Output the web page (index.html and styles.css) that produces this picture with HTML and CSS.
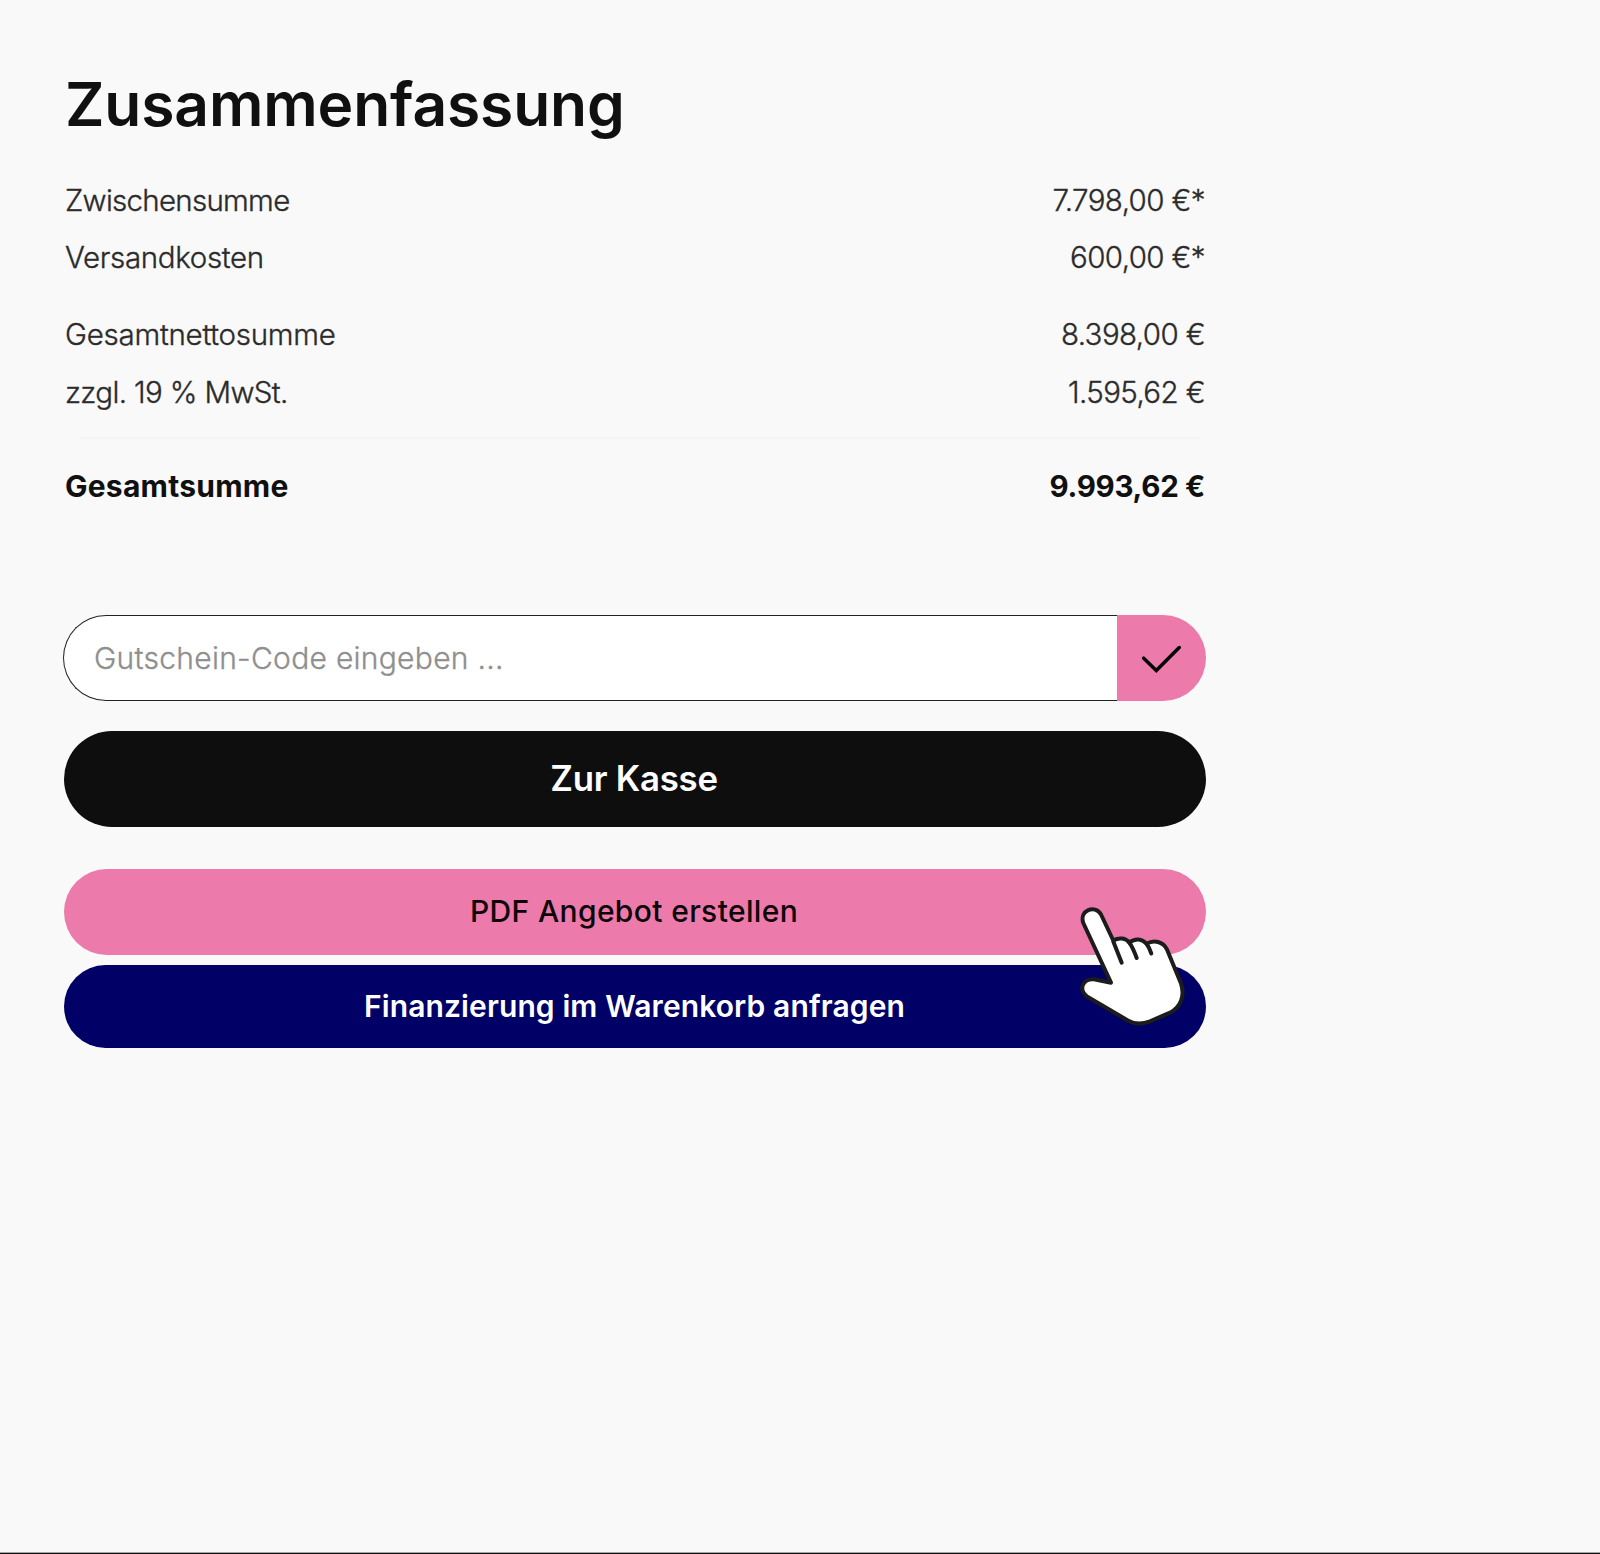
FILE: index.html
```html
<!DOCTYPE html>
<html lang="de">
<head>
<meta charset="utf-8">
<title>Zusammenfassung</title>
<link rel="stylesheet" href="styles.css">
</head>
<body>
<main class="summary">
  <h1 class="title">Zusammenfassung</h1>
  <dl class="totals">
    <div class="row subtotal"><dt>Zwischensumme</dt><dd>7.798,00 €*</dd></div>
    <div class="row shipping"><dt>Versandkosten</dt><dd>600,00 €*</dd></div>
    <div class="row net"><dt>Gesamtnettosumme</dt><dd>8.398,00 €</dd></div>
    <div class="row vat"><dt>zzgl. 19 % MwSt.</dt><dd>1.595,62 €</dd></div>
    <div class="row total"><dt>Gesamtsumme</dt><dd>9.993,62 €</dd></div>
  </dl>
  <form class="voucher">
    <input class="code" type="text" placeholder="Gutschein-Code eingeben ..." aria-label="Gutschein-Code">
    <button class="apply" type="button" aria-label="Einlösen">
      <svg width="40" height="30" viewBox="0 0 40 30" fill="none" stroke="#050505" stroke-width="3.5" stroke-linecap="round" stroke-linejoin="miter"><path d="M1.7 14.200 14.300 26.600 37.200 3.500"/></svg>
    </button>
  </form>
  <button class="button checkout" type="button"><span>Zur Kasse</span></button>
  <button class="button offer" type="button"><span>PDF Angebot erstellen</span></button>
  <button class="button finance" type="button"><span>Finanzierung im Warenkorb anfragen</span></button>
</main>
<svg class="pointer" width="106" height="122" viewBox="0 0 106 122" fill="#fff" stroke="#1c1c1c" stroke-width="4" stroke-linecap="round" stroke-linejoin="round">
  <path d="M31 76.700 3.300 17C-1 4.500 15-2 21 8.500L33.300 34.500C39 31 46 32 49.300 36.700C55 32 62 32.500 66.500 37.800C74 33.500 83 35.500 87 43.500L101 77.500C105 89.500 101 101 90 106.700L70 115.300C62 118.500 55 118.500 48.300 114.700L7 90.500C-2 83 3 72.500 14 73.300Z"/>
  <path d="M33.300 35.500 41.700 56.700M49.300 36.700Q52.500 40.500 56.700 52M66.500 37.800Q69 41 71.300 47.500" fill="none"/>
</svg>
</body>
</html>
```
FILE: styles.css
```css
* { box-sizing: border-box; }

body {
  margin: 0;
  height: 1554px;
  padding: 68px 0 0 64px;
  background: #f9f9f9;
  border-bottom: 1px solid #111;
  box-shadow: inset 0 -1px #a5a5a5;
  color: #2b2b2b;
  font-family: Inter, "Liberation Sans", sans-serif;
  position: relative;
}

.summary { width: 1142px; display: flex; flex-direction: column; }

.title {
  margin: 0;
  height: 104px;
  padding-left: 1px;
  color: #101010;
  font-size: 60.5px;
  line-height: 73px;
  font-weight: 600;
  letter-spacing: -0.14px;
  white-space: nowrap;
}

.totals {
  margin: 0;
  font-size: 29.5px;
  font-weight: 300;
  line-height: 36px;
  -webkit-text-stroke: 0.35px currentColor;
}
.totals dd { margin: 0; letter-spacing: -0.6px; }
.row { display: flex; justify-content: space-between; height: 57px; padding: 10px 1px 0; }
.subtotal dt { letter-spacing: -0.73px; }
.shipping { height: 77px; }
.shipping dt { letter-spacing: -0.34px; }
.net { height: 58px; }
.net dt { letter-spacing: -0.26px; }
.vat { height: 73px; }
.vat dt { letter-spacing: -0.63px; }
.total {
  height: 178px;
  padding-top: 31px;
  color: #101010;
  font-weight: 700;
  -webkit-text-stroke: 0;
  background: linear-gradient(#f5f5f5, #f5f5f5) 16px 0 / 1120px 2px no-repeat;
}
.total dt { font-size: 30px; letter-spacing: 0.24px; }
.total dd { letter-spacing: -0.3px; }

.voucher { display: flex; height: 86px; margin: 0 0 30px -1px; }
.code {
  flex: 1;
  min-width: 0;
  padding: 0 0 0 30px;
  border: 1px solid #222;
  border-right: 0;
  border-radius: 43px 0 0 43px;
  background: #fff;
  font: 300 30px Inter, "Liberation Sans", sans-serif;
  letter-spacing: 0.28px;
}
.code::placeholder {
  color: #8f8f8f;
  opacity: 1;
  -webkit-text-stroke: 0.35px #8f8f8f;
}
.apply {
  display: grid;
  place-items: center;
  width: 89px;
  padding: 2px 0 0;
  border: 0;
  border-radius: 0 43px 43px 0;
  background: #ec7bab;
}

.button {
  padding: 0 2px 2px 0;
  border: 0;
  border-radius: 48px;
  font-family: inherit;
  color: #fff;
}
.checkout { height: 96px; margin-bottom: 42px; background: #0e0e0f; font-size: 34.8px; font-weight: 600; letter-spacing: -0.25px; }
.offer { height: 86px; margin-bottom: 10px; background: #ec7bab; color: #0d0508; font-size: 30px; font-weight: 500; letter-spacing: 0.36px; }
.finance { height: 83px; padding: 0 1px 2px 0; background: #000066; font-size: 30px; font-weight: 600; letter-spacing: 0.11px; }

.pointer { position: absolute; left: 1080px; top: 906px; overflow: visible; }
```
